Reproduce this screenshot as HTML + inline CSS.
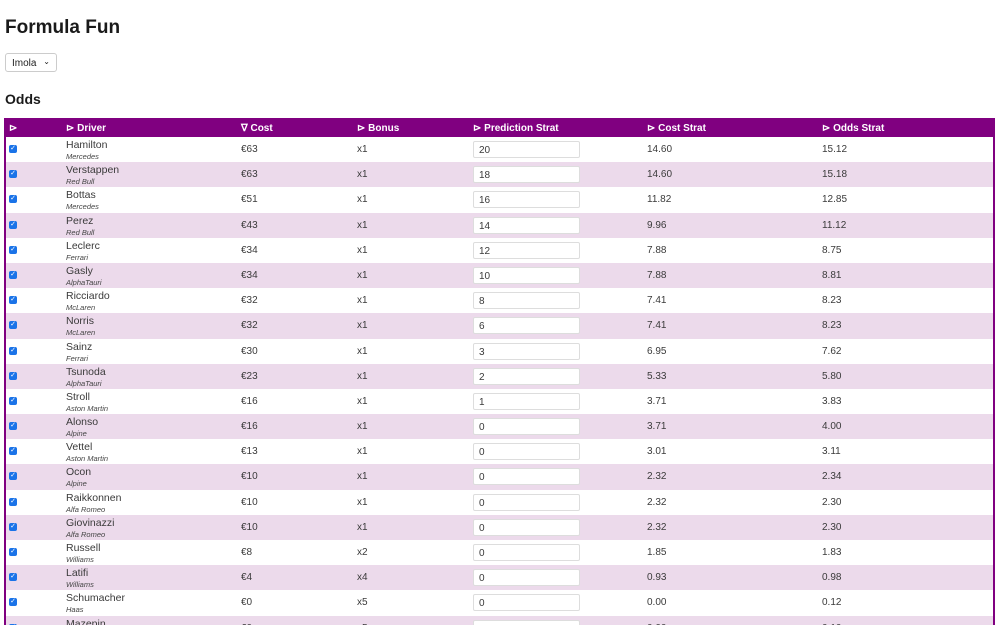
<!DOCTYPE html>
<html><head><meta charset="utf-8"><style>
html,body{margin:0;width:1000px;height:625px;overflow:hidden}
body{font-family:"Liberation Sans",Arial,sans-serif;color:#222;background:#fff;position:relative}
h1{position:absolute;left:5px;top:17px;margin:0;font-size:19px;font-weight:bold;color:#1a1a1a}
.sel{position:absolute;left:5px;top:53px;width:52px;height:19px;border:1px solid #ccc;border-radius:3px;font-size:10px;box-sizing:border-box;padding:4px 0 0 6px}
.sel span{position:absolute;right:6px;top:3px;font-size:8px}
h2{position:absolute;left:5px;top:91px;margin:0;font-size:14px;font-weight:bold;color:#1a1a1a}
.tbl{position:absolute;left:4px;top:118px;width:987px;border:2px solid #800080;border-bottom:none;height:520px}
.hd{height:17px;background:#800080;color:#fff;font-size:10px;font-weight:bold;position:relative}
.hd div,.r div{position:absolute}
.r{height:25.2px;position:relative;font-size:10px;color:#3a3a3a}
.cb{width:8px;height:8px;background:#1a73e8;border-radius:2px;left:3px;top:8px;color:#fff;font-size:7px;line-height:8px;text-align:center}
.nm{left:60px;top:2px;line-height:12px;font-size:10.5px}
.nm i{font-size:7.5px;display:block;color:#444}
.v{top:7px}
.in{left:467px;top:4px;width:107px;height:17px;background:#fff;border:1px solid #ddd;box-sizing:border-box;padding:3px 0 0 5px;border-radius:2px}
</style></head><body>
<h1>Formula Fun</h1>
<div class="sel">Imola<span>⌄</span></div>
<h2>Odds</h2>
<div class="tbl">
<div class="hd"><div style="left:3px;top:3px">⊳</div><div style="left:60px;top:3px">⊳ Driver</div><div style="left:235px;top:3px">∇ Cost</div><div style="left:351px;top:3px">⊳ Bonus</div><div style="left:467px;top:3px">⊳ Prediction Strat</div><div style="left:641px;top:3px">⊳ Cost Strat</div><div style="left:816px;top:3px">⊳ Odds Strat</div></div>
<div id="rows"></div>
</div>
<script>
var d=[["Hamilton","Mercedes","€63","x1","20","14.60","15.12"],["Verstappen","Red Bull","€63","x1","18","14.60","15.18"],["Bottas","Mercedes","€51","x1","16","11.82","12.85"],["Perez","Red Bull","€43","x1","14","9.96","11.12"],["Leclerc","Ferrari","€34","x1","12","7.88","8.75"],["Gasly","AlphaTauri","€34","x1","10","7.88","8.81"],["Ricciardo","McLaren","€32","x1","8","7.41","8.23"],["Norris","McLaren","€32","x1","6","7.41","8.23"],["Sainz","Ferrari","€30","x1","3","6.95","7.62"],["Tsunoda","AlphaTauri","€23","x1","2","5.33","5.80"],["Stroll","Aston Martin","€16","x1","1","3.71","3.83"],["Alonso","Alpine","€16","x1","0","3.71","4.00"],["Vettel","Aston Martin","€13","x1","0","3.01","3.11"],["Ocon","Alpine","€10","x1","0","2.32","2.34"],["Raikkonnen","Alfa Romeo","€10","x1","0","2.32","2.30"],["Giovinazzi","Alfa Romeo","€10","x1","0","2.32","2.30"],["Russell","Williams","€8","x2","0","1.85","1.83"],["Latifi","Williams","€4","x4","0","0.93","0.98"],["Schumacher","Haas","€0","x5","0","0.00","0.12"],["Mazepin","Haas","€0","x5","0","0.00","0.10"]];
var h="";d.forEach(function(r,i){h+='<div class="r" style="background:'+(i%2?'#ecdaeb':'#fff')+'"><div class="cb">✓</div><div class="nm">'+r[0]+'<i>'+r[1]+'</i></div><div class="v" style="left:235px">'+r[2]+'</div><div class="v" style="left:351px">'+r[3]+'</div><div class="in">'+r[4]+'</div><div class="v" style="left:641px">'+r[5]+'</div><div class="v" style="left:816px">'+r[6]+'</div></div>'});
document.getElementById("rows").innerHTML=h;
</script>
</body></html>
